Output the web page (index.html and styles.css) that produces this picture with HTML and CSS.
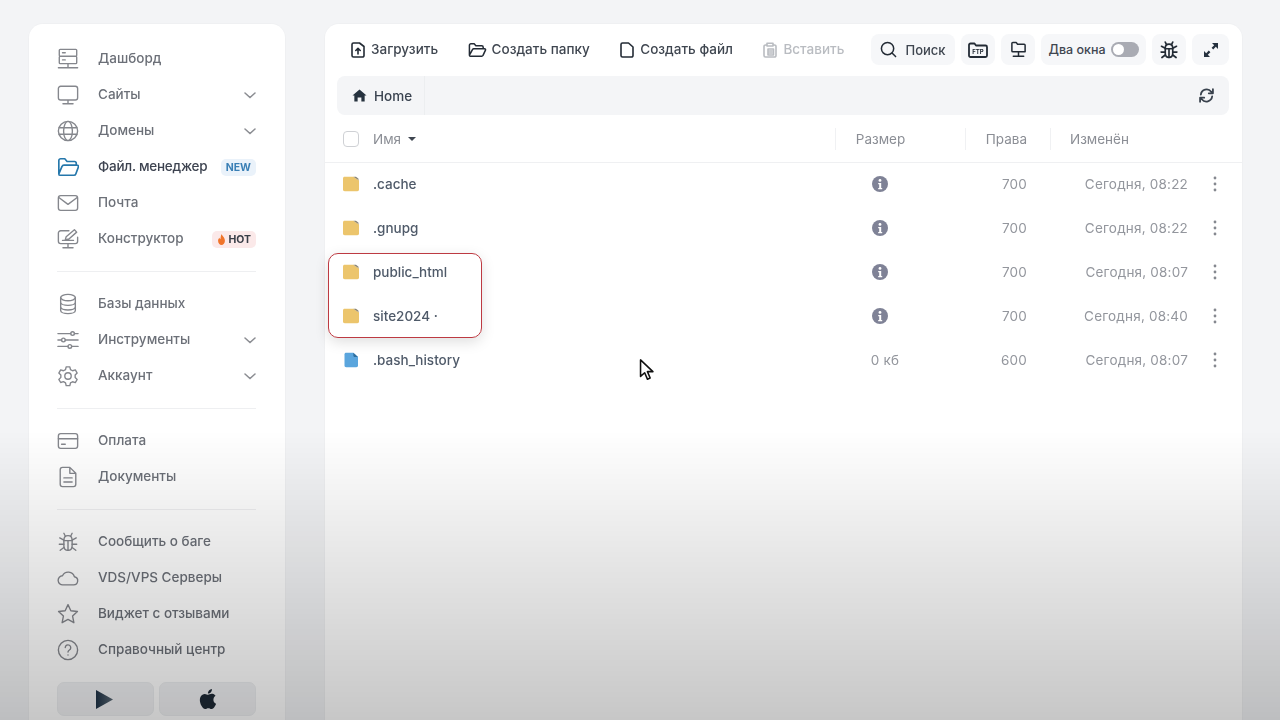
FILE: index.html
```html
<!DOCTYPE html>
<html lang="ru">

<head>
    <meta charset="UTF-8">
    <meta name="viewport" content="width=device-width, initial-scale=1.0">
    <title>Файловый менеджер</title>
    <link rel="stylesheet" href="styles.css">
</head>

<body>
    <svg class="defs" width="0" height="0">
        <defs>
            <linearGradient id="play-fill" x1="0" y1="0" x2="1" y2="0">
                <stop offset="0" stop-color="#1f3347" />
                <stop offset="1" stop-color="#5b6975" />
            </linearGradient>
        </defs>
        <symbol id="i-folder" viewBox="0 0 16 16">
            <path d="M0 2.500C0 1.400.6.800 1.700.800h8.600L16 4.600v9c0 1-.7 1.700-1.700 1.700H1.700C.6 15.300 0 14.600 0 13.600z" fill="#ecc56c" />
            <path d="M10.300.8h1.900c1 0 2 .6 2.700 1.500L16 4.600z" fill="#8d8674" />
        </symbol>
        <symbol id="i-info" viewBox="0 0 16 16">
            <circle cx="8" cy="8" r="8" fill="#7f8296" />
            <circle cx="8" cy="4.400" r="1.400" fill="#fff" />
            <path d="M6.200 7h3v5h1v1.300H6.200V12h1V8.300h-1z" fill="#fff" />
        </symbol>
        <symbol id="i-dots" viewBox="0 0 4 16">
            <circle cx="2" cy="2" r="1.400" fill="#85888f" />
            <circle cx="2" cy="8" r="1.400" fill="#85888f" />
            <circle cx="2" cy="14" r="1.400" fill="#85888f" />
        </symbol>
        <symbol id="i-chevron" viewBox="0 0 12 7">
            <path d="M1 1l5 4.500L11 1" fill="none" stroke="#8b8d92" stroke-width="1.500" stroke-linecap="round" />
        </symbol>
        <symbol id="i-bug" viewBox="0 0 24 24">
            <g fill="none" stroke="currentColor" stroke-linecap="round">
                <path d="M7.500 10c0-3 2-5 4.500-5s4.500 2 4.500 5v6c0 3-2 5-4.500 5s-4.500-2-4.500-5z" />
                <path d="M7.500 10.500h9M12 10.500V21M9 5.500L7.500 2.500M15 5.500l1.500-3M7.500 10L3 7.500M16.500 10L21 7.500M7.500 14.500H2.500M16.500 14.500h5M7.500 18L3.500 21M16.500 18l4 3" />
            </g>
        </symbol>
    </svg>

    <div class="app">
        <aside class="sidebar">
            <nav class="menu">
                <a class="menu-item">
                    <svg class="menu-icon" viewBox="0 0 24 24"><path d="M3.500 1.500h17a1 1 0 0 1 1 1v5.500a1 1 0 0 1-1 1h-17a1 1 0 0 1-1-1V2.500a1 1 0 0 1 1-1zM3.500 9h17a1 1 0 0 1 1 1v6a1 1 0 0 1-1 1h-17a1 1 0 0 1-1-1v-6a1 1 0 0 1 1-1zM12 17v4M1.500 21.500h21M6 5.200h3M6 13h3" /></svg>
                    <span class="menu-text">Дашборд</span>
                </a>
                <a class="menu-item">
                    <svg class="menu-icon" viewBox="0 0 24 24"><path d="M4 2.500h16a2.500 2.500 0 0 1 2.500 2.500v10a2.500 2.500 0 0 1-2.500 2.500H4A2.500 2.500 0 0 1 1.500 15V5A2.500 2.500 0 0 1 4 2.500zM12 17.500v4M6.500 21.500h11" /></svg>
                    <span class="menu-text">Сайты</span>
                    <svg class="chevron"><use href="#i-chevron" /></svg>
                </a>
                <a class="menu-item">
                    <svg class="menu-icon" viewBox="0 0 24 24"><circle cx="12" cy="12" r="10.500" /><ellipse cx="12" cy="12" rx="4.800" ry="10.500" /><path d="M2.300 8.500h19.400M2.300 15.500h19.400" /></svg>
                    <span class="menu-text">Домены</span>
                    <svg class="chevron"><use href="#i-chevron" /></svg>
                </a>
                <a class="menu-item active">
                    <svg class="menu-icon" viewBox="0 0 24 24"><path d="M2 19.500V5a2 2 0 0 1 2-2h4.500l2.500 3h8a2 2 0 0 1 2 2v2M2 19.500a1.500 1.500 0 0 0 1.500 1.500h15c1 0 1.700-.5 2-1.400l2.800-7.500c.4-1-.3-2.100-1.400-2.100H7.500c-1 0-1.700.5-2 1.400L2 19.500z" /></svg>
                    <span class="menu-text menu-text-tight">Файл. менеджер</span>
                    <span class="tag tag-new">NEW</span>
                </a>
                <a class="menu-item">
                    <svg class="menu-icon" viewBox="0 0 24 24"><rect x="1.500" y="4" width="21" height="16" rx="2.500" /><path d="M2 6l10 7.500L22 6" /></svg>
                    <span class="menu-text">Почта</span>
                </a>
                <a class="menu-item">
                    <svg class="menu-icon" viewBox="0 0 24 24"><path d="M13 3H4a2.500 2.500 0 0 0-2.500 2.500v9A2.500 2.500 0 0 0 4 17h16a2.500 2.500 0 0 0 2.500-2.500V10M12 17v4M6.500 21.500h11M9 13l1-3.500L19 2l2.500 2.500-8.500 7.500zM6 13.500h12" /></svg>
                    <span class="menu-text">Конструктор</span>
                    <span class="tag tag-hot"><svg class="flame" viewBox="0 0 10 12"><path d="M5 0c.5 2 3.800 3.800 3.800 7.300C8.800 10 7 12 5 12S1.200 10 1.200 7.300c0-1.500.8-2.500 1.600-3.300 0 1 .4 1.600 1 1.800C4.200 3.800 4.200 1.600 5 0z" fill="#f0742a" /></svg>HOT</span>
                </a>
            </nav>
            <hr class="menu-line">
            <nav class="menu">
                <a class="menu-item">
                    <svg class="menu-icon" viewBox="0 0 24 24"><ellipse cx="12" cy="5" rx="8" ry="3.500" /><path d="M4 5v14c0 2 3.600 3.500 8 3.500s8-1.500 8-3.500V5M4 10c0 2 3.600 3.500 8 3.500s8-1.500 8-3.500M4 15c0 2 3.600 3.500 8 3.500s8-1.500 8-3.500" /></svg>
                    <span class="menu-text">Базы данных</span>
                </a>
                <a class="menu-item">
                    <svg class="menu-icon" viewBox="0 0 24 24"><path d="M1 5h14M19 5h4M1 12h4M9 12h14M1 19h11M16 19h7" /><circle cx="17" cy="5" r="2" /><circle cx="7" cy="12" r="2" /><circle cx="14" cy="19" r="2" /></svg>
                    <span class="menu-text">Инструменты</span>
                    <svg class="chevron"><use href="#i-chevron" /></svg>
                </a>
                <a class="menu-item">
                    <svg class="menu-icon" viewBox="0 0 24 24"><circle cx="12" cy="12" r="3.500" /><path d="M10 2h4l.7 3 2.300 1.300 3-.9 2 3.400-2.200 2.200v2.600l2.200 2.200-2 3.400-3-.9L14.700 19.600 14 22.500h-4l-.7-3L7 18.200l-3 .9-2-3.400 2.200-2.200v-2.600L2 8.800l2-3.400 3 .9L9.300 5z" /></svg>
                    <span class="menu-text">Аккаунт</span>
                    <svg class="chevron"><use href="#i-chevron" /></svg>
                </a>
            </nav>
            <hr class="menu-line">
            <nav class="menu">
                <a class="menu-item">
                    <svg class="menu-icon" viewBox="0 0 24 24"><rect x="1.500" y="4" width="21" height="16" rx="2.500" /><path d="M1.500 9.500h21M5 15.500h4" /></svg>
                    <span class="menu-text">Оплата</span>
                </a>
                <a class="menu-item">
                    <svg class="menu-icon" viewBox="0 0 24 24"><path d="M6 1.500h8l6.500 6.500v12a2.500 2.500 0 0 1-2.500 2.500H6A2.500 2.500 0 0 1 3.500 20V4A2.500 2.500 0 0 1 6 1.500zM14 1.500V8h6.500M7.500 13h9M7.500 17.500h9" /></svg>
                    <span class="menu-text">Документы</span>
                </a>
            </nav>
            <hr class="menu-line">
            <nav class="menu">
                <a class="menu-item">
                    <svg class="menu-icon menu-icon-bug"><use href="#i-bug" /></svg>
                    <span class="menu-text">Сообщить о баге</span>
                </a>
                <a class="menu-item">
                    <svg class="menu-icon" viewBox="0 0 24 24"><path d="M6.500 19.500h11.500a4.500 4.500 0 0 0 1-8.900A7 7 0 0 0 6 9.500a5 5 0 0 0 .5 10z" /></svg>
                    <span class="menu-text">VDS/VPS Серверы</span>
                </a>
                <a class="menu-item">
                    <svg class="menu-icon" viewBox="0 0 24 24"><path d="M12 1.800l3.100 6.600 7.200.9-5.300 5 1.400 7.200-6.400-3.600-6.400 3.600L7 14.300l-5.300-5 7.200-.9z" /></svg>
                    <span class="menu-text">Виджет с отзывами</span>
                </a>
                <a class="menu-item">
                    <svg class="menu-icon" viewBox="0 0 24 24"><circle cx="12" cy="12" r="10.500" /><path d="M9 9.300A3 3 0 1 1 13.500 12c-1 .6-1.500 1.200-1.500 2.300M12 17.300v.2" /></svg>
                    <span class="menu-text">Справочный центр</span>
                </a>
            </nav>
            <div class="store-row">
                <a class="store-btn">
                    <svg class="store-icon store-icon-play" viewBox="0 0 18 20"><path d="M0 0l18 10L0 20z" fill="url(#play-fill)" /></svg>
                </a>
                <a class="store-btn">
                    <svg class="store-icon" viewBox="0 0 24 24"><path d="M18.710 19.500C17.880 20.740 17 21.950 15.660 21.970C14.320 22 13.890 21.180 12.370 21.180C10.840 21.180 10.370 21.950 9.100 22C7.790 22.050 6.800 20.680 5.960 19.470C4.250 17 2.940 12.450 4.700 9.390C5.570 7.870 7.130 6.910 8.820 6.880C10.100 6.860 11.320 7.750 12.110 7.750C12.890 7.750 14.370 6.680 15.920 6.840C16.570 6.870 18.390 7.100 19.560 8.820C19.470 8.880 17.390 10.100 17.410 12.630C17.440 15.650 20.060 16.660 20.090 16.670C20.060 16.740 19.670 18.110 18.710 19.500M13 3.500C13.730 2.670 14.940 2.040 15.940 2C16.070 3.170 15.600 4.350 14.900 5.190C14.210 6.040 13.070 6.700 11.950 6.610C11.800 5.460 12.360 4.260 13 3.500Z" fill="#1f2a36" /></svg>
                </a>
            </div>
        </aside>

        <main class="files">
            <div class="toolbar">
                <div class="tool-actions">
                    <a class="tool-link">
                        <svg class="tool-icon" viewBox="0 0 16 16"><path d="M3.500 1h6L14 4.500v9a1.500 1.500 0 0 1-1.500 1.500h-9A1.500 1.500 0 0 1 2 13.500v-11A1.500 1.500 0 0 1 3.500 1zM8 12V6.500M5.800 8.500L8 6.300l2.200 2.200" /></svg>
                        <span class="tool-label">Загрузить</span>
                    </a>
                    <a class="tool-link">
                        <svg class="tool-icon tool-icon-wide" viewBox="0 0 20 16"><path d="M1.500 13.500V3a1.500 1.500 0 0 1 1.500-1.500h3.500l1.800 2h6.200A1.500 1.500 0 0 1 16 5v1.500M1.500 13.500a1 1 0 0 0 1 1h12c.6 0 1-.3 1.300-.8l2.600-5.500c.3-.7-.2-1.500-1-1.500H6c-.6 0-1 .3-1.300.8z" /></svg>
                        <span class="tool-label">Создать папку</span>
                    </a>
                    <a class="tool-link">
                        <svg class="tool-icon" viewBox="0 0 16 16"><path d="M3.500 1h6L14 5v8.500a1.500 1.500 0 0 1-1.500 1.500h-9A1.500 1.500 0 0 1 2 13.500v-11A1.500 1.500 0 0 1 3.500 1z" /></svg>
                        <span class="tool-label">Создать файл</span>
                    </a>
                    <a class="tool-link disabled">
                        <svg class="tool-icon" viewBox="0 0 16 16"><path d="M4.500 3H3.500A1.500 1.500 0 0 0 2 4.500v9A1.500 1.500 0 0 0 3.500 15h9a1.500 1.500 0 0 0 1.500-1.500v-9A1.500 1.500 0 0 0 12.500 3h-1M5 1.200h6V4H5zM6 7h5.500v6H6zM7.500 9h2.500M7.500 11h2.500" /></svg>
                        <span class="tool-label">Вставить</span>
                    </a>
                </div>
                <div class="tool-buttons">
                    <a class="tool-btn tool-search">
                        <svg class="tool-icon tool-icon-big" viewBox="0 0 18 18"><circle cx="8" cy="8" r="6.500" /><path d="M13 13l3.500 3.500" /></svg>
                        Поиск
                    </a>
                    <a class="tool-btn tool-square">
                        <svg class="tool-icon tool-icon-ftp" viewBox="0 0 20 16"><path d="M1 13.500V3a1.500 1.500 0 0 1 1.500-1.500h4l1.500 2h9.500A1.500 1.500 0 0 1 19 5v8.500a1.500 1.500 0 0 1-1.500 1.500h-15A1.500 1.500 0 0 1 1 13.500z" /><text x="10" y="11.500" class="ftp-text">FTP</text></svg>
                    </a>
                    <a class="tool-btn tool-square">
                        <svg class="tool-icon tool-icon-big" viewBox="0 0 18 18"><path d="M2 10.500V2.500a1 1 0 0 1 1-1h3.500l1.500 2h7a1 1 0 0 1 1 1v7H3a1 1 0 0 1-1-1zM9 11.500v4.500M3.500 16.200h11" /></svg>
                    </a>
                    <div class="tool-btn tool-split">
                        Два окна
                        <span class="toggle"></span>
                    </div>
                    <a class="tool-btn tool-square">
                        <svg class="tool-icon-bug"><use href="#i-bug" /></svg>
                    </a>
                    <a class="tool-btn tool-square tool-expand">
                        <svg class="expand-icon" viewBox="0 0 16 16"><path d="M9 1h6v6l-2.200-2.200-2.600 2.600-1.600-1.600 2.600-2.600zM7 15H1V9l2.200 2.200 2.600-2.600 1.600 1.600-2.600 2.600z" fill="#26323f" /></svg>
                    </a>
                </div>
            </div>

            <div class="crumbs">
                <a class="crumb">
                    <svg class="crumb-icon" viewBox="0 0 16 16"><path d="M8 1.500L15.500 8h-2v6.500h-3.500V10H6v4.500H2.500V8h-2z" fill="#26323f" /></svg>
                    Home
                </a>
                <svg class="refresh" viewBox="0 0 18 18"><path d="M3 8a6.200 6.200 0 0 1 11-3l1.500 1.500M15 10a6.200 6.200 0 0 1-11 3l-1.500-1.500M15.800 2.300v4.400h-4.400M2.200 15.700v-4.400h4.400" /></svg>
            </div>

            <div class="file-head">
                <div class="col-name">
                    <span class="checkbox"></span>
                    <span>Имя</span>
                    <span class="sort-arrow"></span>
                </div>
                <div class="col-size">Размер</div>
                <div class="col-rights">Права</div>
                <div class="col-date">Изменён</div>
            </div>

            <div class="file-row">
                <div class="col-name"><svg class="file-icon"><use href="#i-folder" /></svg><span class="file-name">.cache</span></div>
                <div class="col-size"><svg class="info-icon"><use href="#i-info" /></svg></div>
                <div class="col-rights">700</div>
                <div class="col-date">Сегодня, 08:22</div>
                <svg class="dots"><use href="#i-dots" /></svg>
            </div>
            <div class="file-row">
                <div class="col-name"><svg class="file-icon"><use href="#i-folder" /></svg><span class="file-name">.gnupg</span></div>
                <div class="col-size"><svg class="info-icon"><use href="#i-info" /></svg></div>
                <div class="col-rights">700</div>
                <div class="col-date">Сегодня, 08:22</div>
                <svg class="dots"><use href="#i-dots" /></svg>
            </div>
            <div class="file-row">
                <div class="col-name"><svg class="file-icon"><use href="#i-folder" /></svg><span class="file-name">public_html</span></div>
                <div class="col-size"><svg class="info-icon"><use href="#i-info" /></svg></div>
                <div class="col-rights">700</div>
                <div class="col-date">Сегодня, 08:07</div>
                <svg class="dots"><use href="#i-dots" /></svg>
            </div>
            <div class="file-row">
                <div class="col-name"><svg class="file-icon"><use href="#i-folder" /></svg><span class="file-name">site2024 ·</span></div>
                <div class="col-size"><svg class="info-icon"><use href="#i-info" /></svg></div>
                <div class="col-rights">700</div>
                <div class="col-date">Сегодня, 08:40</div>
                <svg class="dots"><use href="#i-dots" /></svg>
            </div>
            <div class="file-row">
                <div class="col-name">
                    <svg class="file-icon" viewBox="0 0 16 16"><path d="M1.500 2.500C1.500 1.400 2.100.8 3.200.8h7.100L15 5v8.600c0 1-.7 1.700-1.700 1.700H3.200c-1.100 0-1.700-.7-1.700-1.700z" fill="#5aa5dd" /><path d="M10.300.8L15 5h-3.200c-1 0-1.500-.6-1.500-1.500z" fill="#2f6f9f" /></svg>
                    <span class="file-name">.bash_history</span>
                </div>
                <div class="col-size"><span class="size-text">0 кб</span></div>
                <div class="col-rights">600</div>
                <div class="col-date">Сегодня, 08:07</div>
                <svg class="dots"><use href="#i-dots" /></svg>
            </div>
        </main>
    </div>

    <div class="select-box"></div>
    <svg class="cursor" viewBox="0 0 16 24"><path d="M1.500 1v18l4.500-4 3 7 3-1.300-3-6.900h6z" fill="#fff" stroke="#111" stroke-width="1.700" stroke-linejoin="round" /></svg>
    <div class="fade"></div>
</body>

</html>
```

FILE: styles.css
```css
* {
    box-sizing: border-box;
}

html,
body {
    height: 100%;
}

body {
    margin: 0;
    overflow: hidden;
    position: relative;
    background-color: #f3f4f6;
    font-family: 'Inter', 'Liberation Sans', sans-serif;
    font-size: 13.5px;
    color: #3f4650;
}

.defs {
    position: absolute;
}

.app {
    display: flex;
    align-items: stretch;
    gap: 40px;
    height: 720px;
    padding: 24px 38px 0 29px;
    filter: blur(0.45px);
}

/* sidebar */
.sidebar {
    width: 256px;
    flex-shrink: 0;
    padding: 17px 29px 0 28px;
    background-color: #fff;
    border-radius: 14px 14px 0 0;
    box-shadow: 0 0 0 1px rgba(0, 0, 0, 0.015);
    color: #6c7078;
}

.menu-item {
    display: flex;
    align-items: center;
    height: 36px;
}

.menu-icon {
    width: 22px;
    height: 22px;
    margin-right: 19px;
    flex-shrink: 0;
    fill: none;
    stroke: #85878d;
    stroke-width: 1.5;
    stroke-linecap: round;
    stroke-linejoin: round;
}

.menu-icon-bug {
    color: #85878d;
}

.menu-text {
    flex: 1;
    padding-bottom: 2px;
    white-space: nowrap;
    font-weight: 500;
}

.menu-text-tight {
    letter-spacing: -0.25px;
}

.menu-item.active .menu-text {
    color: #3d4350;
}

.menu-item.active .menu-icon {
    stroke: #2577ab;
    stroke-width: 1.8;
}

.chevron {
    width: 12px;
    height: 7px;
}

.tag {
    display: flex;
    align-items: center;
    height: 17px;
    padding: 0 5px;
    border-radius: 5px;
    font-size: 10.5px;
    font-weight: 700;
}

.tag-new {
    background-color: #eaf2fa;
    color: #3a7fb5;
}

.tag-hot {
    background-color: #fbe9e9;
    color: #3a3f48;
}

.flame {
    width: 9px;
    height: 11px;
    margin-right: 2px;
}

.menu-line {
    margin: 14px 0 14px;
    border: 0;
    border-top: 1px solid #eeeff1;
}

.store-row {
    display: flex;
    gap: 5px;
    margin-top: 14px;
}

.store-btn {
    flex: 1;
    height: 34px;
    display: flex;
    align-items: center;
    justify-content: center;
    background-color: #f1f2f4;
    border: 1px solid #eceef0;
    border-radius: 7px;
}

.store-icon {
    width: 24px;
    height: 24px;
}

.store-icon-play {
    width: 17px;
    height: 19px;
    margin-right: 2px;
}

/* files */
.files {
    flex: 1;
    min-width: 0;
    padding-top: 10px;
    background-color: #fff;
    border-radius: 14px 14px 0 0;
    box-shadow: 0 0 0 1px rgba(0, 0, 0, 0.015);
}

.toolbar {
    display: flex;
    align-items: flex-start;
    justify-content: space-between;
    height: 32px;
    padding: 0 13px 0 25px;
}

.tool-actions {
    display: flex;
    align-items: center;
    gap: 29.5px;
    height: 31px;
}

.tool-link {
    display: flex;
    align-items: center;
    gap: 5px;
    white-space: nowrap;
    font-weight: 500;
    color: #3f4650;
}

.tool-label {
    padding-bottom: 2px;
}

.tool-link.disabled {
    color: #b9bcc1;
}

.tool-icon {
    width: 16px;
    height: 16px;
    fill: none;
    stroke: #232b35;
    stroke-width: 1.6;
    stroke-linecap: round;
    stroke-linejoin: round;
}

.tool-icon-wide {
    width: 19px;
}

.tool-link.disabled .tool-icon {
    stroke: #b9bcc1;
}

.tool-icon-big {
    width: 17px;
    height: 17px;
}

.tool-icon-ftp {
    width: 20px;
    height: 16px;
    stroke-width: 1.8;
}

.ftp-text {
    font-size: 6px;
    font-weight: 700;
    text-anchor: middle;
    fill: #232b35;
    stroke: none;
}

.tool-icon-bug {
    width: 20px;
    height: 20px;
    color: #232b35;
    stroke-width: 2;
}

.expand-icon {
    width: 16px;
    height: 16px;
}

.tool-buttons {
    display: flex;
    gap: 6px;
}

.tool-btn {
    display: flex;
    align-items: center;
    justify-content: center;
    height: 31px;
    background-color: #f6f7f9;
    border-radius: 8px;
    font-weight: 500;
    white-space: nowrap;
}

.tool-search {
    width: 84px;
    gap: 8px;
    font-size: 13px;
}

.tool-square {
    width: 34px;
}

.tool-expand {
    width: 37px;
}

.tool-split {
    width: 105px;
    gap: 5px;
    font-size: 12.5px;
}

.toggle {
    position: relative;
    width: 28px;
    height: 15px;
    background-color: #a9abb3;
    border-radius: 8px;
}

.toggle::before {
    content: "";
    position: absolute;
    left: 2px;
    top: 2px;
    width: 11px;
    height: 11px;
    background-color: #fff;
    border-radius: 50%;
}

.crumbs {
    display: flex;
    align-items: center;
    justify-content: space-between;
    height: 39px;
    margin: 10px 13px 0 12px;
    padding-right: 14px;
    background-color: #f4f5f7;
    border-radius: 8px;
}

.crumb {
    display: flex;
    align-items: center;
    gap: 7px;
    height: 100%;
    width: 88px;
    padding-left: 15px;
    border-right: 1px solid #eceef0;
    font-weight: 500;
    color: #3a4350;
}

.crumb-icon {
    width: 15px;
    height: 15px;
}

.refresh {
    width: 17px;
    height: 17px;
    fill: none;
    stroke: #39424d;
    stroke-width: 1.9;
    stroke-linecap: round;
    stroke-linejoin: round;
}

.file-head,
.file-row {
    display: flex;
    align-items: center;
}

.file-head {
    height: 48px;
    border-bottom: 1px solid #eff0f2;
    color: #8b8e95;
}

.file-row {
    height: 44px;
    padding-bottom: 2px;
    color: #93969d;
    letter-spacing: 0.2px;
}

.col-name {
    display: flex;
    align-items: center;
    width: 510px;
    padding-left: 18px;
}

.col-size {
    display: flex;
    justify-content: center;
    width: 130px;
    padding-right: 40px;
}

.size-text {
    margin-left: 10px;
}

.col-rights {
    width: 85px;
    padding-right: 23px;
    text-align: right;
}

.col-date {
    width: 154px;
    padding-right: 16px;
    text-align: right;
    white-space: nowrap;
}

.file-head .col-size,
.file-head .col-rights,
.file-head .col-date {
    height: 22px;
    line-height: 22px;
    border-left: 1px solid #f0f1f3;
}

.file-head .col-date {
    padding-left: 19px;
    text-align: left;
}

.checkbox {
    width: 16px;
    height: 16px;
    margin-right: 14px;
    border: 1px solid #cfd1d5;
    border-radius: 4px;
}

.sort-arrow {
    width: 0;
    height: 0;
    margin-left: 7px;
    border-left: 4px solid transparent;
    border-right: 4px solid transparent;
    border-top: 4px solid #3f4650;
}

.file-icon {
    width: 16px;
    height: 16px;
    margin-right: 14px;
}

.file-name {
    font-weight: 500;
    color: #4f5a69;
    letter-spacing: 0;
}

.info-icon {
    width: 16px;
    height: 16px;
}

.dots {
    width: 4px;
    height: 16px;
    margin-left: 9px;
}

/* overlays */
.select-box {
    position: absolute;
    left: 328px;
    top: 253px;
    width: 154px;
    height: 85px;
    border: 1px solid #bd3a42;
    border-radius: 10px;
    box-shadow: 0 4px 14px rgba(0, 0, 0, 0.13);
    filter: blur(0.3px);
}

.cursor {
    position: absolute;
    left: 639px;
    top: 359px;
    width: 15px;
    height: 22px;
}

.fade {
    position: absolute;
    left: 0;
    right: 0;
    top: 430px;
    bottom: 0;
    pointer-events: none;
    background: linear-gradient(to bottom, rgba(0, 0, 0, 0), rgba(0, 0, 0, 0.22));
}
```
